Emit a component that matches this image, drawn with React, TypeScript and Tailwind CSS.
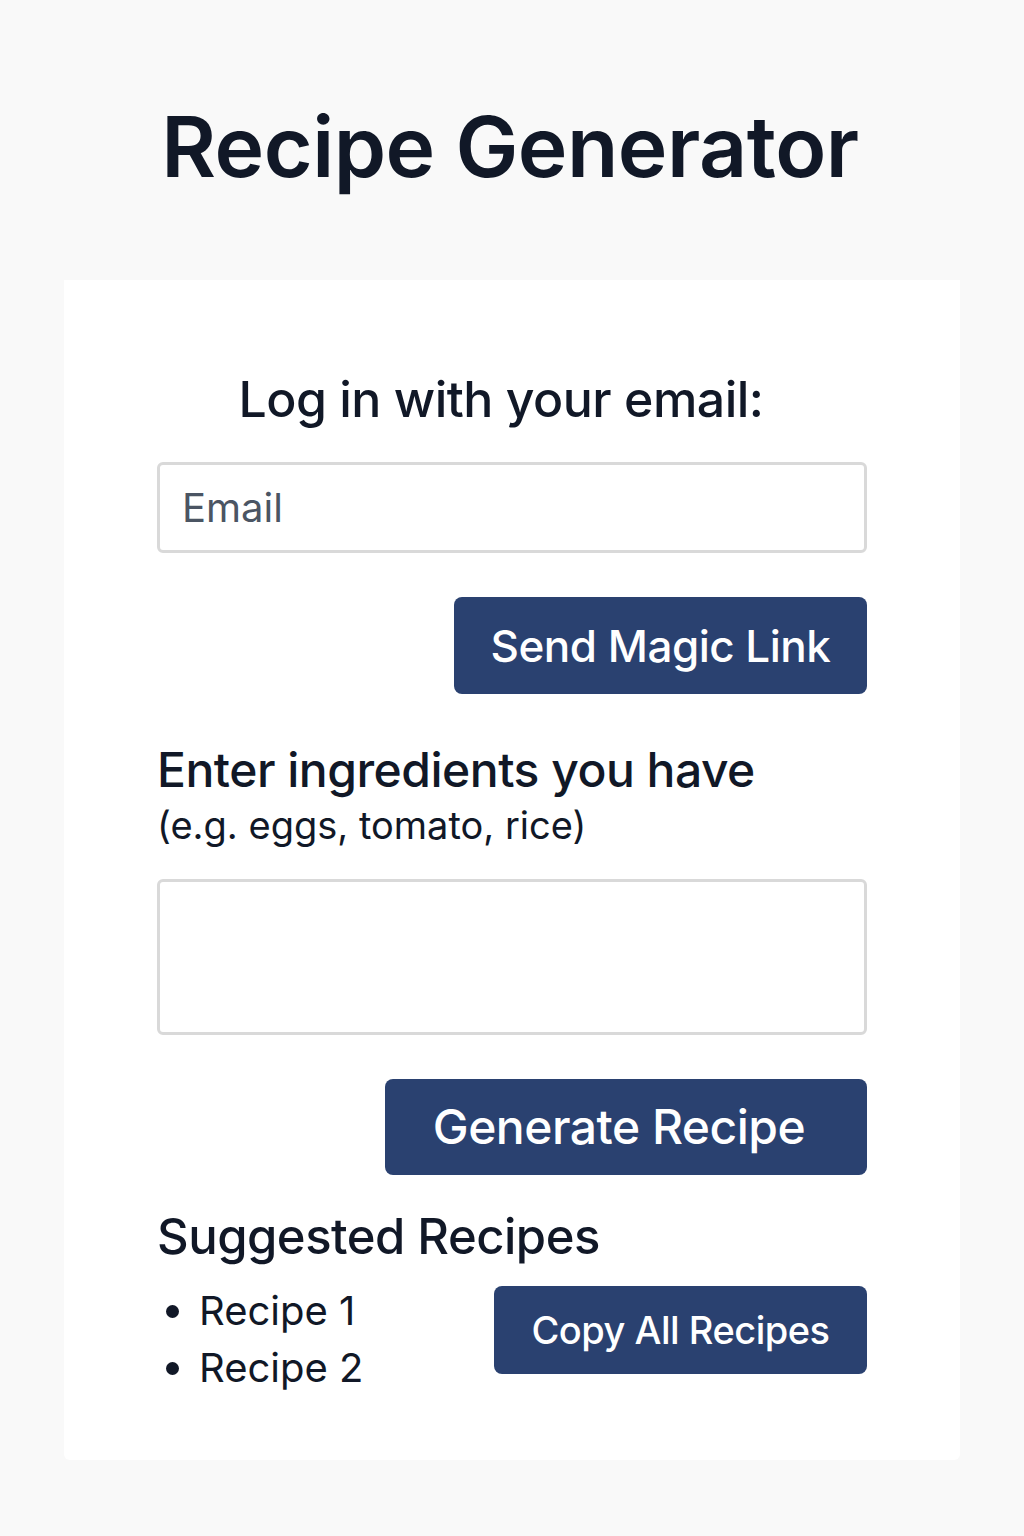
import { useState } from "react";

const font = { fontFamily: "Inter, 'Noto Sans', sans-serif" };

const App = () => {
  const [email, setEmail] = useState("");
  const [ingredients, setIngredients] = useState("");
  const recipes = ["Recipe 1", "Recipe 2"];

  return (
    <div className="min-h-[1536px] w-full bg-[#f9f9f9] text-[#111827]" style={font}>
      <div className="flex flex-col items-center pt-[92px]">
        <h1 className="text-[84px] font-semibold leading-[110px] tracking-[-0.5px] ml-[-4px]">
          Recipe Generator
        </h1>
      </div>

      <div className="mx-[64px] mt-[78px] rounded-b-[6px] bg-white px-[93px] pt-[88px] pb-[64px]">
        <h2 className="text-center text-[50px] font-medium leading-[62px] tracking-[-0.5px] ml-[-22px]">
          Log in with your email:
        </h2>

        <input
          type="email"
          value={email}
          onChange={(e) => setEmail(e.target.value)}
          placeholder="Email"
          className="mt-[32px] block h-[91px] w-full rounded-[6px] border-[3px] border-[#d9d9d9] bg-white px-[22px] text-[40px] outline-none placeholder:text-[#4b5563]"
        />

        <div className="mt-[44px] flex justify-end">
          <button className="h-[97px] w-[413px] rounded-[8px] bg-[#2a4170] text-[44px] font-medium tracking-[-0.5px] text-white">
            Send Magic Link
          </button>
        </div>

        <div className="mt-[47px]">
          <p className="text-[48px] font-medium leading-[58px] tracking-[-0.5px]">Enter ingredients you have</p>
          <p className="mt-[2px] text-[38px] leading-[48px]">(e.g. eggs, tomato, rice)</p>
        </div>

        <textarea
          value={ingredients}
          onChange={(e) => setIngredients(e.target.value)}
          className="mt-[30px] block h-[156px] w-full resize-none rounded-[6px] border-[3px] border-[#d9d9d9] bg-white px-[24px] py-[16px] text-[36px] outline-none"
        />

        <div className="mt-[44px] flex justify-end">
          <button className="h-[96px] w-[482px] rounded-[8px] bg-[#2a4170] pr-[14px] text-[48px] font-medium tracking-[-0.5px] text-white">
            Generate Recipe
          </button>
        </div>

        <h3 className="mt-[31px] text-[49px] font-medium leading-[62px] tracking-[-0.5px]">Suggested Recipes</h3>

        <div className="mt-[14px] flex items-start justify-between">
          <ul className="list-disc pl-[42px] text-[40px] leading-[57px] marker:text-[#111827]">
            {recipes.map((r) => (
              <li key={r}>{r}</li>
            ))}
          </ul>
          <button className="mt-[4px] h-[88px] w-[373px] rounded-[8px] bg-[#2a4170] text-[38px] font-medium tracking-[-0.5px] text-white">
            Copy All Recipes
          </button>
        </div>
      </div>
    </div>
  );
};

export default App;
